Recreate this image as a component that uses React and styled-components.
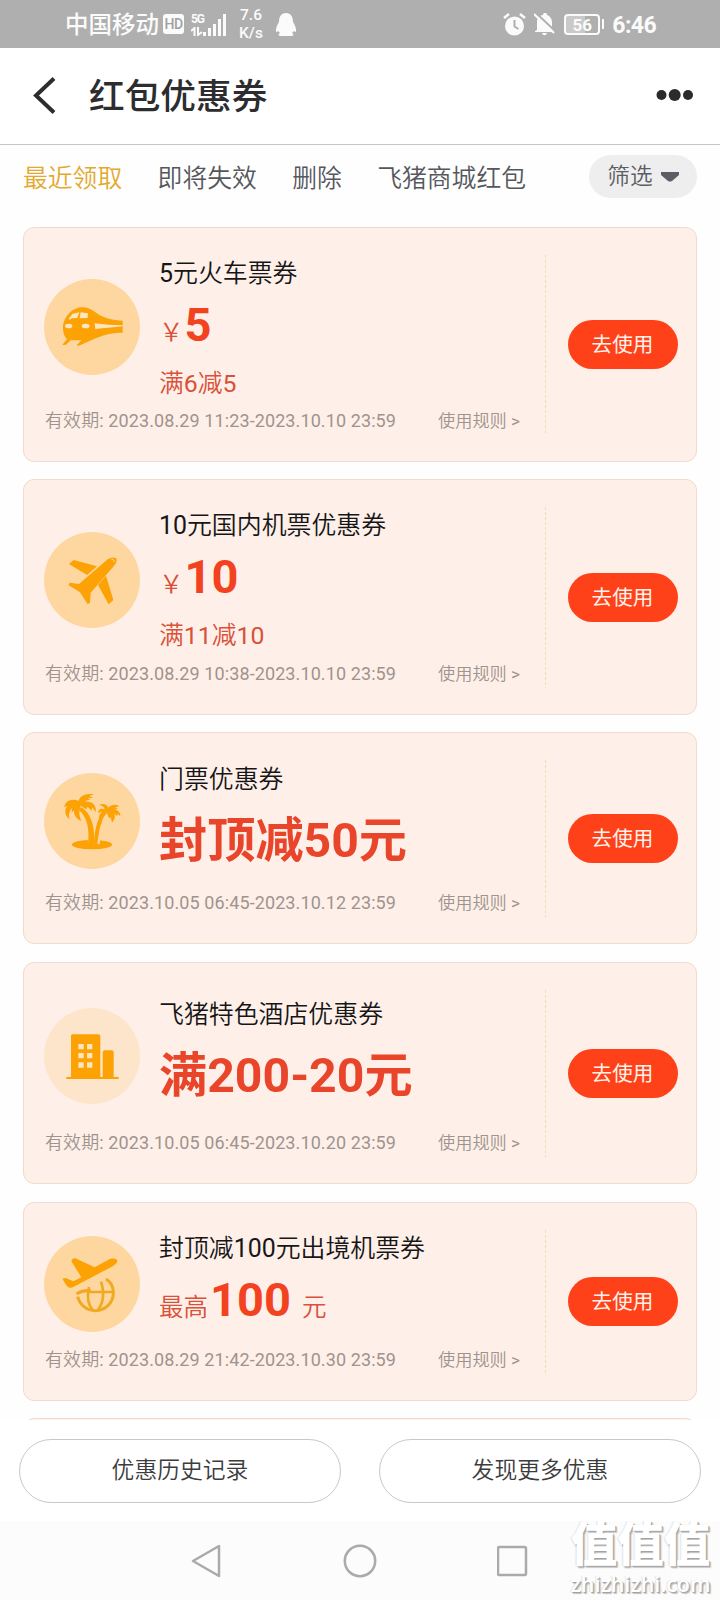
import styled, { createGlobalStyle } from "styled-components"

const thin = `Roboto, "Noto Sans CJK SC DemiLight", "Noto Sans CJK SC", sans-serif`

const GlobalStyle = createGlobalStyle`
    * {
        box-sizing: border-box;
    }
    body {
        margin: 0;
        background: #fff;
        font-family: Roboto, "Noto Sans CJK SC", sans-serif;
    }
`

const Page = styled.div`
    width: 720px;
    height: 1600px;
    display: flex;
    flex-direction: column;
    overflow: hidden;
    position: relative;
    background: #fefefe;
`

/* status bar */

const StatusBar = styled.div`
    height: 48px;
    flex: none;
    display: flex;
    align-items: center;
    justify-content: space-between;
    padding: 0 64px 0 65px;
    background: #afafaf;
    color: #fbfbfb;
`

const StatusGroup = styled.div`
    display: flex;
    align-items: center;
`

const Carrier = styled.span`
    width: 98px;
    padding-top: 2px;
    font-size: 23.5px;
    font-weight: 500;
    line-height: 48px;
    white-space: nowrap;
`

const HdBadge = styled.span`
    width: 21px;
    height: 20px;
    margin-right: 7px;
    border-radius: 3px;
    background: #fbfbfb;
    color: #a0a0a0;
    font-size: 14px;
    font-weight: 500;
    line-height: 21px;
    text-align: center;
    letter-spacing: -0.5px;
`

const Signal = styled.div`
    width: 36px;
    height: 24px;
    display: flex;
    align-items: flex-end;
    margin-right: 11px;
`

const SignalLeft = styled.div`
    width: 12px;
    height: 24px;
    display: flex;
    flex-direction: column;
    justify-content: space-between;
    font-size: 12px;
    font-weight: 700;
    line-height: 14px;
    letter-spacing: -1.2px;
    white-space: nowrap;
`

const Speed = styled.div`
    width: 26px;
    margin-right: 12px;
    font-size: 15.5px;
    font-weight: 500;
    line-height: 18px;
    text-align: center;
    white-space: nowrap;
`

const StatusIcon = styled.svg`
    display: block;
    margin-right: ${({ $gap }) => $gap || 0}px;
`

const Battery = styled.div`
    width: 36px;
    height: 21px;
    border: 2px solid #fbfbfb;
    border-radius: 4px;
    font-size: 17px;
    font-weight: 700;
    line-height: 18px;
    text-align: center;
    background: linear-gradient(90deg, #c9c9c9 60%, #afafaf 60%);
`

const BatteryTip = styled.div`
    width: 2px;
    height: 10px;
    margin: 0 8px 0 2px;
    background: #fbfbfb;
`

const Clock = styled.span`
    font-size: 23px;
    font-weight: 700;
    line-height: 50px;
    padding-top: 3px;
    letter-spacing: -0.6px;
`

/* header */

const Header = styled.header`
    height: 97px;
    flex: none;
    display: flex;
    align-items: center;
    padding: 0 26px 2px 33px;
    border-bottom: 1px solid #c6c6c6;
    background: #fff;
`

const Title = styled.h1`
    flex: 1;
    margin: 4px 0 0 33px;
    color: #2d2d2f;
    font-size: 35.7px;
    font-weight: 500;
    line-height: 90px;
`

const Tabs = styled.nav`
    height: 82px;
    flex: none;
    display: flex;
    align-items: flex-start;
    gap: 35.4px;
    padding: 10px 23px 0 23px;
`

const Tab = styled.span`
    padding-top: 1px;
    color: ${({ $active }) => ($active ? "#e3a92e" : "#55575c")};
    font-family: ${thin};
    font-size: 24.8px;
    line-height: 45px;
    white-space: nowrap;
`

const Filter = styled.button`
    width: 108px;
    height: 43px;
    margin-left: auto;
    padding: 0;
    display: flex;
    align-items: center;
    justify-content: center;
    gap: 8px;
    border: 0;
    border-radius: 22px;
    background: #eeeeee;
    color: #5c5e66;
    font-family: ${thin};
    font-size: 22.7px;
    line-height: 43px;
`

/* coupons */

const List = styled.main`
    flex: 1;
    min-height: 0;
    overflow: hidden;
    padding: 0 23px;
`

const Card = styled.section`
    height: ${({ $height }) => $height}px;
    margin-bottom: ${({ $gap }) => $gap}px;
    display: flex;
    border: 1px solid #f0dccb;
    border-radius: 11px;
    background: #fef0e8;
`

const Detail = styled.div`
    width: 521px;
    display: flex;
    flex-direction: column;
    padding: 25px 0 20px 20px;
`

const Body = styled.div`
    flex: 1;
    min-height: 0;
    display: flex;
    align-items: center;
`

const Badge = styled.div`
    width: 96px;
    height: 96px;
    flex: none;
    border-radius: 50%;
    background: ${({ $pale }) => ($pale ? "#fde5cb" : "#fdd79f")};
`

const Info = styled.div`
    align-self: flex-start;
    padding: ${({ $top }) => $top || 2}px 0 0 19px;
    font-family: ${thin};
    white-space: nowrap;
`

const Name = styled.div`
    height: 36px;
    color: #161618;
    font-size: 24.9px;
    line-height: 37px;
`

const Price = styled.div`
    height: 64px;
    padding-top: 2px;
    color: #d9513a;
    font-size: 24.5px;
    line-height: 64px;
`

const Amount = styled.b`
    margin: ${({ $gap }) => $gap || "0"};
    color: #f2421f;
    font-size: 47px;
    font-weight: 700;
`

const BigPrice = styled.div`
    padding-top: 11px;
    color: #e9452a;
    font-family: Roboto, "Noto Sans CJK SC", sans-serif;
    font-size: 48.2px;
    font-weight: 700;
    line-height: 66px;
`

const Condition = styled.div`
    padding-top: 9px;
    color: #d9513a;
    font-size: 24.8px;
    line-height: 40px;
`

const Meta = styled.div`
    height: 40px;
    display: flex;
    color: #a0938e;
    font-family: ${thin};
    font-size: 18px;
    line-height: 40px;
    white-space: nowrap;
`

const Period = styled.span`
    width: 394px;
    padding-left: 1px;
    letter-spacing: 0.1px;
`

const Rules = styled.span`
    font-size: 17.2px;
`

const Divider = styled.div`
    width: 1px;
    margin: 27px 0 26px;
    background: repeating-linear-gradient(#f1ddb9 0 3px, transparent 3px 5px);
`

const Action = styled.div`
    flex: 1;
    display: flex;
    align-items: center;
    justify-content: center;
    padding-left: 3px;
`

const UseButton = styled.button`
    width: 110px;
    height: 49px;
    padding: 0;
    border: 0;
    border-radius: 25px;
    background: #ff4119;
    color: #fff2ea;
    font-family: inherit;
    font-size: 20.6px;
    line-height: 50px;
`

/* footer */

const Footer = styled.footer`
    height: 101px;
    flex: none;
    display: flex;
    justify-content: space-between;
    padding: 19px 19px 0;
    background: #fff;
`

const FooterButton = styled.button`
    width: 322px;
    height: 64px;
    padding: 0;
    border: 1px solid #c8c8c8;
    border-radius: 32px;
    background: #fff;
    color: #3c3c3e;
    font-family: ${thin};
    font-size: 22.8px;
    line-height: 60px;
`

const NavBar = styled.div`
    height: 79px;
    flex: none;
    display: flex;
    align-items: center;
    justify-content: center;
    gap: 120px;
    background: #fcfcfc;
`

const Watermark = styled.div`
    position: absolute;
    right: 8px;
    bottom: 4px;
    width: 143px;
    color: #fff;
    font-weight: 900;
    text-align: center;
    white-space: nowrap;
    text-shadow: 1px 1px 1px #a0a0a0, 2px 2px 1px #c4c4c4, -1px 0 1px #e4e4e4;
`

const WatermarkName = styled.div`
    font-size: 46.5px;
    line-height: 54px;
`

const WatermarkSite = styled.div`
    font-family: "Open Sans", sans-serif;
    font-size: 21.5px;
    font-weight: 600;
    line-height: 24px;
`

const TrainIcon = () => (
    <svg viewBox="132 207 288 288" fill="#fca204">
        <path d="M189 354C188 332 208 295 244 292c28-2 40 16 62 27 20 9 40 12 62 13v36c-36 0-62 8-88 20-18 8-32 16-48 20l-1-3 13-14h-32l-14 13-10 1 1-3 12-14c-8-8-12-20-12-34Z" />
        <g fill="#fde5bd">
            <path d="m206 326 12-15 20-4-6 17-16 1-7 4ZM242 307l22 3-1 14-24 1Z" />
            <ellipse cx="206" cy="348" rx="11" ry="7" />
            <ellipse cx="257" cy="348" rx="12" ry="7" />
            <path d="M284 340c28 4 55 6 84 6v3c-29 3-56 6-82 8Z" />
        </g>
    </svg>
)

const PlaneIcon = () => (
    <svg viewBox="132 155 288 288" fill="#fca204">
        <path d="M348 234c-5-5-16-3-25 3l-86 74-28-4-4 7 35 22 23 36 7-5 2-30 67-77c9-9 14-20 9-26Z" />
        <path d="m207 251 14-12 70 19-30 26ZM294 314l24-28 22 73-14 13Z" />
        <path d="M334 238c6-3 9 1 8 7" fill="none" stroke="#fdd79f" strokeWidth="3" />
    </svg>
)

const PalmIcon = () => (
    <svg viewBox="132 143 288 288" fill="#fca204">
        <ellipse cx="276" cy="358" rx="60" ry="14" />
        <g fill="none" strokeWidth="20" stroke="#fdd79f">
            <path d="M252 252c22 25 26 60 22 104M320 268c-22 24-28 55-31 88" />
        </g>
        <path d="M243 246c26 12 44 55 39 111h-18c5-44-1-81-28-104ZM318 263c-16 22-22 60-26 93h-10c2-38 8-74 28-98Z" />
        <path d="M236 226c3-13 20-24 46-19l-14 5 12 5-17 2 8 4c-8 0-13 2-17 6 20-3 35 8 34 31l-12-14-1 11-12-13-4 8-17-11c-6 15-5 32 2 46-14-5-23-17-22-32l-7 7 1-14c-8 8-11 20-8 33-13-9-16-27-6-40l-9 5c1-18 20-28 43-20Z" />
        <path d="M314 252c-1-7-7-12-17-12 9-8 25-3 28 7 9-10 25-11 33-4l-12 3 8 5-12 1c11 2 19 9 19 20l-9-6-1 7-9-9c5 9 2 21-6 27l-4-15-5 3-6-16c-9 9-17 18-17 34-11-11-9-29 3-39l-13 5c1-12 9-15 20-11Z" />
    </svg>
)

const HotelIcon = () => (
    <svg viewBox="132 158 288 288" fill="#fca204">
        <path d="M218 237h77q6 0 6 6v122h7v-74q0-6 6-6h21q6 0 6 6v74h15v6H199v-6h14V243q0-6 5-6Z" />
        <path
            fill="#fde5bd"
            d="M235 266h16v16h-16ZM261 266h16v16h-16ZM235 293h16v16h-16ZM261 293h16v16h-16ZM235 321h16v16h-16ZM261 321h16v16h-16Z"
        />
    </svg>
)

const OutboundIcon = () => (
    <svg viewBox="132 123 288 288" fill="#fca204">
        <path d="m187 251 10-2 23 10 24-12-29-47c-2-8 7-12 14-9l55 26 40-22c14-8 28-4 28 3-1 8-11 14-22 20l-110 58c-7 4-14 3-20-4Z" />
        <g fill="none" stroke="#f2a922" strokeWidth="9">
            <path d="M318 252c14 9 22 24 22 41 0 30-24 54-54 54-26 0-47-18-53-42" />
            <path d="M230 297c10-8 25-11 42-10" strokeWidth="10" />
            <path d="M267 276c-7 31-2 54 11 69M303 260c12 37 5 66-9 85M268 291h70" strokeWidth="8" />
        </g>
    </svg>
)

const coupons = [
    {
        icon: TrainIcon, name: "5元火车票券", prefix: "￥", amount: "5", condition: "满6减5",
        period: "2023.08.29 11:23-2023.10.10 23:59", height: 235, gap: 17,
    },
    {
        icon: PlaneIcon, name: "10元国内机票优惠券", prefix: "￥", amount: "10", condition: "满11减10",
        period: "2023.08.29 10:38-2023.10.10 23:59", height: 236, gap: 17,
    },
    {
        icon: PalmIcon, name: "门票优惠券", big: "封顶减50元", top: 3,
        period: "2023.10.05 06:45-2023.10.12 23:59", height: 212, gap: 18,
    },
    {
        icon: HotelIcon, name: "飞猪特色酒店优惠券", big: "满200-20元", pale: true, top: 8,
        period: "2023.10.05 06:45-2023.10.20 23:59", height: 222, gap: 18,
    },
    {
        icon: OutboundIcon, name: "封顶减100元出境机票券", prefix: "最高", amount: "100", suffix: "元",
        period: "2023.08.29 21:42-2023.10.30 23:59", height: 199, gap: 17,
    },
]

const Coupon = ({ item }) => {
    const Icon = item.icon
    return (
        <Card $height={item.height} $gap={item.gap}>
            <Detail>
                <Body>
                    <Badge $pale={item.pale}>
                        <Icon />
                    </Badge>
                    <Info $top={item.top}>
                        <Name>{item.name}</Name>
                        {item.big ? (
                            <BigPrice>{item.big}</BigPrice>
                        ) : (
                            <Price>
                                {item.prefix}
                                <Amount $gap={item.suffix ? "0 11px 0 2px" : "0 0 0 1px"}>{item.amount}</Amount>
                                {item.suffix}
                            </Price>
                        )}
                        {item.condition && <Condition>{item.condition}</Condition>}
                    </Info>
                </Body>
                <Meta>
                    <Period>有效期: {item.period}</Period>
                    <Rules>使用规则 &gt;</Rules>
                </Meta>
            </Detail>
            <Divider />
            <Action>
                <UseButton>去使用</UseButton>
            </Action>
        </Card>
    )
}

export default function App() {
    return (
        <Page>
            <GlobalStyle />
            <StatusBar>
                <StatusGroup>
                    <Carrier>中国移动</Carrier>
                    <HdBadge>HD</HdBadge>
                    <Signal>
                        <SignalLeft>
                            <span>5G</span>
                            <svg width="12" height="9" fill="none" stroke="#fbfbfb" strokeWidth="2">
                                <path d="M0 4 3.500 1v8M7 0v8l4-3" />
                            </svg>
                        </SignalLeft>
                        <svg width="23" height="22" fill="#fbfbfb">
                            <path d="M0 18h3v4H0ZM5 14h3v8H5ZM10 10h3v12h-3ZM15 5h3v17h-3ZM20 0h3v22h-3Z" />
                        </svg>
                    </Signal>
                    <Speed>
                        7.6
                        <br />
                        K/s
                    </Speed>
                    <StatusIcon width="20" height="23" fill="#fbfbfb">
                        <path d="M10 0c5 0 7 4 7 9 2 3 3 6 3 8 0 3-1 2-2 1l-2 2c2 1 2 3-1 3H5c-3 0-3-2-1-3l-2-2c-1 1-2 2-2-1 0-2 1-5 3-8 0-5 2-9 7-9Z" />
                    </StatusIcon>
                </StatusGroup>
                <StatusGroup>
                    <StatusIcon width="23" height="23" viewBox="0 0 23 23" $gap={8}>
                        <circle cx="11.500" cy="13" r="9.500" fill="#fbfbfb" />
                        <path d="M1 5 6 1M22 5l-5-4" stroke="#fbfbfb" strokeWidth="2.500" />
                        <path d="M11.500 7v6.500l4 2.500" fill="none" stroke="#afafaf" strokeWidth="2" />
                    </StatusIcon>
                    <StatusIcon width="21" height="23" viewBox="0 0 21 23" $gap={9}>
                        <path d="M3 17V9c0-4 3-7 6-7 0-3 4-3 4 0 3 1 5 4 5 7v6l2 3v1H1v-1ZM8 20h5c-1 3-4 3-5 0Z" fill="#fbfbfb" />
                        <path d="m2 0 19 18" stroke="#afafaf" strokeWidth="2" />
                        <path d="m0 1 20 19" stroke="#fbfbfb" strokeWidth="2" />
                    </StatusIcon>
                    <Battery>56</Battery>
                    <BatteryTip />
                    <Clock>6:46</Clock>
                </StatusGroup>
            </StatusBar>

            <Header>
                <svg width="23" height="37" fill="none" stroke="#2d2d2f" strokeWidth="4">
                    <path d="M21 1.500 3 18.500l18 17" />
                </svg>
                <Title>红包优惠券</Title>
                <svg width="38" height="14" fill="#2b2b2b">
                    <circle cx="5.500" cy="7" r="5" />
                    <circle cx="18.700" cy="7" r="6" />
                    <circle cx="32" cy="7" r="5" />
                </svg>
            </Header>

            <Tabs>
                <Tab $active>最近领取</Tab>
                <Tab>即将失效</Tab>
                <Tab>删除</Tab>
                <Tab>飞猪商城红包</Tab>
                <Filter>
                    筛选
                    <svg width="18" height="10" fill="#5c5e66">
                        <path d="M0 0h18v3L11 9q-2 1-4 0L0 3Z" />
                    </svg>
                </Filter>
            </Tabs>

            <List>
                {coupons.map((item) => (
                    <Coupon item={item} key={item.name} />
                ))}
                <Card $height={199} $gap={0} />
            </List>

            <Footer>
                <FooterButton>优惠历史记录</FooterButton>
                <FooterButton>发现更多优惠</FooterButton>
            </Footer>

            <NavBar>
                <svg width="32" height="34" fill="none" stroke="#aaa" strokeWidth="2.500" strokeLinejoin="round">
                    <path d="M28 2v30L2 17Z" />
                </svg>
                <svg width="34" height="34" fill="none" stroke="#aaa" strokeWidth="2.500">
                    <circle cx="17" cy="17" r="15.200" />
                </svg>
                <svg width="32" height="34" fill="none" stroke="#aaa" strokeWidth="2.500">
                    <rect x="1" y="3" width="28" height="28" rx="1.500" />
                </svg>
            </NavBar>

            <Watermark>
                <WatermarkName>值值值</WatermarkName>
                <WatermarkSite>zhizhizhi.com</WatermarkSite>
            </Watermark>
        </Page>
    )
}
